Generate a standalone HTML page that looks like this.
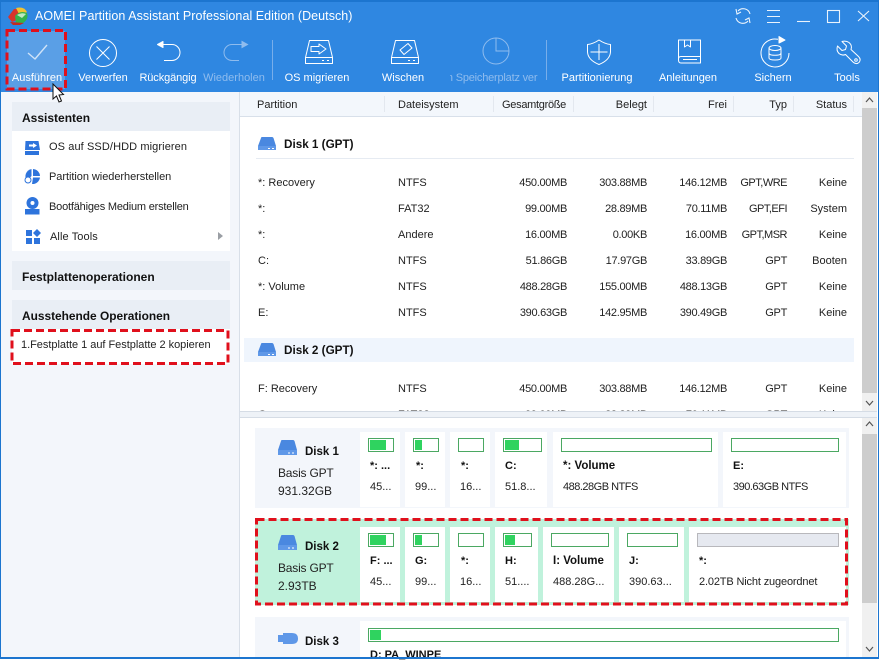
<!DOCTYPE html>
<html><head><meta charset="utf-8"><style>
html,body{margin:0;padding:0}
body{width:879px;height:659px;overflow:hidden;position:relative;background:#fff;font-family:"Liberation Sans",sans-serif;font-size:11px;color:#222}
.b{position:absolute}
.t{position:absolute;white-space:nowrap;line-height:16px;font-size:11px;color:#222;margin-top:1px}
.r{text-align:right;width:100px;letter-spacing:-.3px}
.h{font-weight:bold;color:#111}
.l{position:absolute;white-space:nowrap;line-height:16px;font-size:11px;color:#fff;text-align:center;width:90px;top:70px}
.d{color:#8fbcee}
.c{position:absolute;background:#fff}
.bar{position:absolute;height:12px;border:1px solid #4ba862;background:#fff}
.bar i{position:absolute;left:1px;top:1px;bottom:1px;background:#2fd35f}
svg{position:absolute;left:0;top:0}
</style></head><body>
<div class="b" style="left:0;top:0;width:879px;height:92px;background:#2f87e1"></div>
<div class="b" style="left:0;top:0;width:879px;height:2px;background:#1c75cf"></div>
<div class="b" style="left:7px;top:31px;width:58px;height:58px;background:#5a9fe6"></div>
<div class="b" style="left:0;top:92px;width:239px;height:567px;background:#f3f6fb"></div>
<div class="b" style="left:239px;top:92px;width:1px;height:567px;background:#d8dfe8"></div>
<div class="b" style="left:240px;top:92px;width:622px;height:24px;background:#f3f7fc;border-bottom:1px solid #d8e0ea"></div>
<div class="b" style="left:862px;top:92px;width:15px;height:319px;background:#f0f0f0"></div>
<div class="b" style="left:862px;top:108px;width:15px;height:285px;background:#cdcdcd"></div>
<div class="b" style="left:240px;top:411px;width:637px;height:7px;background:#eef2f7;border-top:1px solid #d5dce5;border-bottom:1px solid #d5dce5;box-sizing:border-box"></div>
<div class="b" style="left:862px;top:418px;width:15px;height:239px;background:#f0f0f0"></div>
<div class="b" style="left:862px;top:434px;width:15px;height:169px;background:#cdcdcd"></div>

<!-- sidebar -->
<div class="b" style="left:12px;top:102px;width:218px;height:29px;background:#e9eef5"></div>
<div class="b" style="left:12px;top:131px;width:218px;height:120px;background:#fff"></div>
<div class="b" style="left:12px;top:261px;width:218px;height:29px;background:#e9eef5"></div>
<div class="b" style="left:12px;top:300px;width:218px;height:29px;background:#e9eef5"></div>
<div class="b" style="left:12px;top:329px;width:218px;height:35px;background:#fff"></div>
<div class="t h" style="left:22px;top:109px;font-size:12px">Assistenten</div>
<div class="t" style="left:49px;top:138px;letter-spacing:.1px">OS auf SSD/HDD migrieren</div>
<div class="t" style="left:49px;top:168px;letter-spacing:-.05px">Partition wiederherstellen</div>
<div class="t" style="left:49px;top:198px;letter-spacing:-.19px">Bootfähiges Medium erstellen</div>
<div class="t" style="left:50px;top:228px;letter-spacing:.1px">Alle Tools</div>
<div class="t h" style="left:22px;top:268px;font-size:12px">Festplattenoperationen</div>
<div class="t h" style="left:22px;top:307px;font-size:11.9px">Ausstehende Operationen</div>
<div class="t" style="left:21px;top:336px;letter-spacing:-.03px">1.Festplatte 1 auf Festplatte 2 kopieren</div>

<!-- table -->
<div class="t" style="left:257px;top:96px">Partition</div>
<div class="t" style="left:398px;top:96px">Dateisystem</div>
<div class="t r" style="left:466px;top:96px">Gesamtgröße</div>
<div class="t r" style="left:547px;top:96px;letter-spacing:0">Belegt</div>
<div class="t r" style="left:627px;top:96px;letter-spacing:0">Frei</div>
<div class="t r" style="left:687px;top:96px;letter-spacing:0">Typ</div>
<div class="t r" style="left:747px;top:96px;letter-spacing:0">Status</div>
<div class="b" style="left:384px;top:96px;width:1px;height:16px;background:#e3e8ef"></div>
<div class="b" style="left:493px;top:96px;width:1px;height:16px;background:#e3e8ef"></div>
<div class="b" style="left:573px;top:96px;width:1px;height:16px;background:#e3e8ef"></div>
<div class="b" style="left:653px;top:96px;width:1px;height:16px;background:#e3e8ef"></div>
<div class="b" style="left:733px;top:96px;width:1px;height:16px;background:#e3e8ef"></div>
<div class="b" style="left:793px;top:96px;width:1px;height:16px;background:#e3e8ef"></div>
<div class="b" style="left:853px;top:96px;width:1px;height:16px;background:#e3e8ef"></div>

<div class="b" style="left:256px;top:158px;width:598px;height:1px;background:#e6ebf2"></div>
<div class="t h" style="left:284px;top:136px;font-size:11.7px">Disk 1 (GPT)</div>

<div class="t" style="left:258px;top:174px">*: Recovery</div><div class="t" style="left:398px;top:174px">NTFS</div><div class="t r" style="left:467px;top:174px">450.00MB</div><div class="t r" style="left:547px;top:174px">303.88MB</div><div class="t r" style="left:627px;top:174px">146.12MB</div><div class="t r" style="left:687px;top:174px;letter-spacing:-.5px">GPT,WRE</div><div class="t r" style="left:747px;top:174px;letter-spacing:0">Keine</div>
<div class="t" style="left:258px;top:200px">*:</div><div class="t" style="left:398px;top:200px">FAT32</div><div class="t r" style="left:467px;top:200px">99.00MB</div><div class="t r" style="left:547px;top:200px">28.89MB</div><div class="t r" style="left:627px;top:200px">70.11MB</div><div class="t r" style="left:687px;top:200px;letter-spacing:-.5px">GPT,EFI</div><div class="t r" style="left:747px;top:200px;letter-spacing:0">System</div>
<div class="t" style="left:258px;top:226px">*:</div><div class="t" style="left:398px;top:226px">Andere</div><div class="t r" style="left:467px;top:226px">16.00MB</div><div class="t r" style="left:547px;top:226px">0.00KB</div><div class="t r" style="left:627px;top:226px">16.00MB</div><div class="t r" style="left:687px;top:226px;letter-spacing:-.5px">GPT,MSR</div><div class="t r" style="left:747px;top:226px;letter-spacing:0">Keine</div>
<div class="t" style="left:258px;top:252px">C:</div><div class="t" style="left:398px;top:252px">NTFS</div><div class="t r" style="left:467px;top:252px">51.86GB</div><div class="t r" style="left:547px;top:252px">17.97GB</div><div class="t r" style="left:627px;top:252px">33.89GB</div><div class="t r" style="left:687px;top:252px">GPT</div><div class="t r" style="left:747px;top:252px;letter-spacing:0">Booten</div>
<div class="t" style="left:258px;top:278px">*: Volume</div><div class="t" style="left:398px;top:278px">NTFS</div><div class="t r" style="left:467px;top:278px">488.28GB</div><div class="t r" style="left:547px;top:278px">155.00MB</div><div class="t r" style="left:627px;top:278px">488.13GB</div><div class="t r" style="left:687px;top:278px">GPT</div><div class="t r" style="left:747px;top:278px;letter-spacing:0">Keine</div>
<div class="t" style="left:258px;top:304px">E:</div><div class="t" style="left:398px;top:304px">NTFS</div><div class="t r" style="left:467px;top:304px">390.63GB</div><div class="t r" style="left:547px;top:304px">142.95MB</div><div class="t r" style="left:627px;top:304px">390.49GB</div><div class="t r" style="left:687px;top:304px">GPT</div><div class="t r" style="left:747px;top:304px;letter-spacing:0">Keine</div>

<div class="b" style="left:244px;top:338px;width:610px;height:24px;background:#eff5fd"></div>
<div class="t h" style="left:284px;top:342px;font-size:11.7px">Disk 2 (GPT)</div>
<div class="t" style="left:258px;top:380px">F: Recovery</div><div class="t" style="left:398px;top:380px">NTFS</div><div class="t r" style="left:467px;top:380px">450.00MB</div><div class="t r" style="left:547px;top:380px">303.88MB</div><div class="t r" style="left:627px;top:380px">146.12MB</div><div class="t r" style="left:687px;top:380px">GPT</div><div class="t r" style="left:747px;top:380px;letter-spacing:0">Keine</div>
<div class="b" style="left:240px;top:402px;width:622px;height:9px;overflow:hidden">
<div class="t" style="left:18px;top:4px">G:</div><div class="t" style="left:158px;top:4px">FAT32</div><div class="t r" style="left:227px;top:4px">99.00MB</div><div class="t r" style="left:307px;top:4px">28.89MB</div><div class="t r" style="left:387px;top:4px">70.11MB</div><div class="t r" style="left:447px;top:4px">GPT</div><div class="t r" style="left:507px;top:4px;letter-spacing:0">Keine</div>
</div>

<!-- disk panels -->
<div class="b" style="left:255px;top:428px;width:594px;height:80px;background:#f3f6fb"></div>
<div class="b" style="left:255px;top:519px;width:594px;height:86px;background:#c0f2dc"></div>
<div class="b" style="left:255px;top:617px;width:594px;height:42px;background:#f3f6fb"></div>

<div class="t h" style="left:305px;top:443px;font-size:11.5px">Disk 1</div>
<div class="t" style="left:278px;top:464px;font-size:12px;letter-spacing:-.2px">Basis GPT</div>
<div class="t" style="left:278px;top:482px;font-size:12px">931.32GB</div>
<div class="t h" style="left:305px;top:538px;font-size:11.5px">Disk 2</div>
<div class="t" style="left:278px;top:559px;font-size:12px;letter-spacing:-.2px">Basis GPT</div>
<div class="t" style="left:278px;top:577px;font-size:12px">2.93TB</div>
<div class="t h" style="left:305px;top:633px;font-size:11.5px">Disk 3</div>

<!-- disk1 cards -->
<div class="c" style="left:360px;top:432px;width:40px;height:75px"></div>
<div class="c" style="left:405px;top:432px;width:40px;height:75px"></div>
<div class="c" style="left:450px;top:432px;width:40px;height:75px"></div>
<div class="c" style="left:495px;top:432px;width:52px;height:75px"></div>
<div class="c" style="left:553px;top:432px;width:165px;height:75px"></div>
<div class="c" style="left:723px;top:432px;width:123px;height:75px"></div>
<div class="bar" style="left:368px;top:438px;width:24px"><i style="width:16px"></i></div>
<div class="bar" style="left:413px;top:438px;width:24px"><i style="width:7px"></i></div>
<div class="bar" style="left:458px;top:438px;width:24px"></div>
<div class="bar" style="left:503px;top:438px;width:37px"><i style="width:14px"></i></div>
<div class="bar" style="left:561px;top:438px;width:149px"></div>
<div class="bar" style="left:731px;top:438px;width:106px"></div>
<div class="t h" style="left:370px;top:457px">*: ...</div><div class="t" style="left:370px;top:478px">45...</div>
<div class="t h" style="left:416px;top:457px">*:</div><div class="t" style="left:415px;top:478px">99...</div>
<div class="t h" style="left:461px;top:457px">*:</div><div class="t" style="left:460px;top:478px">16...</div>
<div class="t h" style="left:505px;top:457px">C:</div><div class="t" style="left:505px;top:478px">51.8...</div>
<div class="t h" style="left:563px;top:457px;font-size:11.5px">*: Volume</div><div class="t" style="left:563px;top:478px;letter-spacing:-.5px">488.28GB NTFS</div>
<div class="t h" style="left:733px;top:457px">E:</div><div class="t" style="left:733px;top:478px;letter-spacing:-.5px">390.63GB NTFS</div>

<!-- disk2 cards -->
<div class="c" style="left:360px;top:527px;width:40px;height:75px"></div>
<div class="c" style="left:405px;top:527px;width:40px;height:75px"></div>
<div class="c" style="left:450px;top:527px;width:40px;height:75px"></div>
<div class="c" style="left:495px;top:527px;width:43px;height:75px"></div>
<div class="c" style="left:543px;top:527px;width:71px;height:75px"></div>
<div class="c" style="left:619px;top:527px;width:65px;height:75px"></div>
<div class="c" style="left:689px;top:527px;width:157px;height:75px"></div>
<div class="bar" style="left:368px;top:533px;width:24px"><i style="width:16px"></i></div>
<div class="bar" style="left:413px;top:533px;width:24px"><i style="width:7px"></i></div>
<div class="bar" style="left:458px;top:533px;width:24px"></div>
<div class="bar" style="left:503px;top:533px;width:27px"><i style="width:10px"></i></div>
<div class="bar" style="left:551px;top:533px;width:56px"></div>
<div class="bar" style="left:627px;top:533px;width:49px"></div>
<div class="bar" style="left:697px;top:533px;width:140px;background:#e6e9f0;border-color:#b8b8bc"></div>
<div class="t h" style="left:370px;top:552px">F: ...</div><div class="t" style="left:370px;top:573px">45...</div>
<div class="t h" style="left:415px;top:552px">G:</div><div class="t" style="left:415px;top:573px">99...</div>
<div class="t h" style="left:461px;top:552px">*:</div><div class="t" style="left:460px;top:573px">16...</div>
<div class="t h" style="left:505px;top:552px">H:</div><div class="t" style="left:505px;top:573px">51....</div>
<div class="t h" style="left:553px;top:552px;font-size:11.5px">I: Volume</div><div class="t" style="left:553px;top:573px">488.28G...</div>
<div class="t h" style="left:629px;top:552px">J:</div><div class="t" style="left:629px;top:573px">390.63...</div>
<div class="t h" style="left:699px;top:552px">*:</div><div class="t" style="left:699px;top:573px;letter-spacing:-.15px">2.02TB Nicht zugeordnet</div>

<!-- disk3 -->
<div class="c" style="left:360px;top:621px;width:486px;height:38px"></div>
<div class="bar" style="left:368px;top:628px;width:469px"><i style="width:11px"></i></div>
<div class="t h" style="left:370px;top:646px">D: PA_WINPE</div>

<!-- title + labels -->
<div class="t" style="left:35px;top:7px;font-size:12.5px;color:#fff;line-height:17px;letter-spacing:.05px">AOMEI Partition Assistant Professional Edition (Deutsch)</div>
<div class="l" style="left:-8px">Ausführen</div>
<div class="l" style="left:58px">Verwerfen</div>
<div class="l" style="left:123px;letter-spacing:-.1px">Rückgängig</div>
<div class="l d" style="left:189px">Wiederholen</div>
<div class="l" style="left:272px">OS migrieren</div>
<div class="l" style="left:358px">Wischen</div>
<div class="b" style="left:450px;top:69px;width:90px;height:17px;overflow:hidden"><div class="t d" style="left:-9px;top:0;color:#8fbcee;letter-spacing:-.2px">on Speicherplatz ver</div></div>
<div class="l" style="left:552px">Partitionierung</div>
<div class="l" style="left:643px">Anleitungen</div>
<div class="l" style="left:728px">Sichern</div>
<div class="l" style="left:802px">Tools</div>

<svg width="879" height="659" viewBox="0 0 879 659" fill="none">
<!-- logo -->
<path d="M8 17 L14 9 L20 9 L19 19 L12 22 Z" fill="#d8352b"/>
<path d="M16 8 Q24 6 27 12 L20 16 Z" fill="#f2c230"/>
<path d="M15 16 Q20 10 27 13 Q29 19 23 23 L16 23 Z" fill="#35b24a"/>
<path d="M17 15 Q22 12 26 14 L22 18 Z" fill="#bfe8c0"/>
<path d="M10 22 L24 23 L20 25 L13 25 Z" fill="#c42a22"/>
<!-- window controls -->
<g stroke="#fff" stroke-width="1.1" opacity=".9">
<path d="M738 11 A7 7 0 0 1 750 14 M748 21 A7 7 0 0 1 736 18"/>
<path d="M736 9 L737 14 L741 12 M750 23 L749 18 L745 20"/>
<path d="M767 10.5 H780 M767 16.5 H780 M767 22.5 H780"/>
<path d="M797 21.5 H810"/>
<rect x="827.5" y="10.5" width="12" height="12"/>
<path d="M858 11 L869 21 M869 11 L858 21"/>
</g>
<!-- toolbar icons -->
<g stroke="#fff" stroke-width="1" stroke-linejoin="round">
<path d="M28 53 L35 59 L47 45" stroke="#cfe3f8" stroke-width="1.4"/>
<circle cx="103" cy="53" r="13.5"/>
<path d="M96.500 46.500 L109.500 59.500 M109.500 46.500 L96.500 59.500"/>
<path d="M160 44.5 H172 a8 8 0 0 1 8 8 a8 8 0 0 1 -8 8 H164"/>
<path d="M163 41.500 L157.500 44.500 L163 47.500 Z" fill="#fff"/>
<path d="M305.500 57.500 L309.500 40.500 H328.500 L332.500 57.500 Z"/>
<rect x="305.500" y="57.500" width="27" height="6"/>
<path d="M327 60.500 H329 M322 60.500 H324"/>
<path d="M311 46.500 H319 V44 L326 49 L319 54 V51.500 H311 Z"/>
<path d="M391.500 57.500 L395.500 40.500 H414.500 L418.500 57.500 Z"/>
<rect x="391.500" y="57.500" width="27" height="6"/>
<path d="M413 60.500 H415 M408 60.500 H410"/>
<path d="M400 50 L408 43.500 L412 48 L404 54.500 Z"/>
<path d="M599 40 Q593 44 587.500 44.500 V52 Q588 60 599 64.500 Q610 60 610.500 52 V44.500 Q605 44 599 40 Z"/>
<path d="M599 44 V60 M590.500 52 H607.500"/>
<path d="M678.500 40 H700.500 V63 H681 Q678.500 63 678.500 60 Z M678.500 59 Q678.500 56.500 681 56.500 H700.500 M683 59.500 H697"/>
<path d="M684.500 40 V47 L687.500 45 L690.500 47 V40"/>
<path d="M778 39.300 A14 14 0 1 0 789 53" />
<path d="M779 36.500 L785 40 L779 43 Z" fill="#fff"/>
<ellipse cx="775" cy="48" rx="6" ry="2.500"/>
<path d="M769 48 V58 Q769 60 775 60 Q781 60 781 58 V48 M769 53 Q769 55.300 775 55.300 Q781 55.300 781 53"/>
<path d="M842 41.500 L846.500 46 L845.500 49.500 L842 50.500 L837.500 46 Q836 50.500 839 53.500 Q842 56 845.500 54.500 L853 62 Q856 65 859 62.500 Q861.500 59.500 858.500 56.500 L851 49.500 Q852.500 45.500 849 42.500 Q846 40.500 842 41.500 Z"/>
<circle cx="856" cy="60" r="1.300"/>
</g>
<g stroke="#8fbcee" stroke-width="1">
<path d="M245 44.500 H232 a8 8 0 0 0 -8 8 a8 8 0 0 0 8 8 H239"/>
<path d="M242 41.500 L247.500 44.500 L242 47.500 Z" fill="#8fbcee"/>
<circle cx="496" cy="51" r="13"/>
<path d="M496 38 V51 H509"/>
</g>
<path d="M272.500 40 V80 M546.500 40 V80" stroke="#78aeea"/>
<!-- sidebar icons -->
<g fill="#2e74dc">
<path d="M25.500 141 H38.500 L40 150 H25 Z"/><rect x="25" y="151" width="14" height="4"/>
<path d="M29 144.500 H33 V143 L37 145.500 L33 148 V146.500 H29 Z" fill="#fff"/>
<path d="M33 169 A7.500 7.500 0 0 1 40 176 H33 Z"/><path d="M31.500 169 V176 L27 181 A7.500 7.500 0 0 1 31.500 169 Z"/><path d="M40 177.500 A7.500 7.500 0 0 1 32 184 L33 177.500 Z"/>
<circle cx="28" cy="180" r="3" fill="#fff" stroke="#2e74dc"/>
<circle cx="32.500" cy="203" r="6"/><circle cx="32.500" cy="203" r="2" fill="#fff"/>
<rect x="25" y="209" width="14.500" height="5.500"/>
<rect x="26" y="230" width="6" height="6"/><rect x="26" y="238" width="6" height="6"/><rect x="34" y="238" width="6" height="6"/>
<path d="M37 229 L41 233 L37 237 L33 233 Z"/>
</g>
<path d="M218 232 L223 236 L218 240 Z" fill="#9a9ea4"/>
<!-- disk icons -->
<g fill="#4a88e0">
<path d="M261 138 Q261 137 262 137 H272 Q273 137 273.500 138 L276 146 H258 Z"/><path d="M258 146 H276 V150 H258 Z" fill="#5f98e8"/>
<path d="M261 344 Q261 343 262 343 H272 Q273 343 273.500 344 L276 352 H258 Z"/><path d="M258 352 H276 V356 H258 Z" fill="#5f98e8"/>
<path d="M281 441 Q281 440 282 440 H293 Q294 440 294.500 441 L297 450 H278 Z"/><path d="M278 450 H297 V455 H278 Z" fill="#5f98e8"/>
<path d="M281 536 Q281 535 282 535 H293 Q294 535 294.500 536 L297 545 H278 Z"/><path d="M278 545 H297 V550 H278 Z" fill="#5f98e8"/>
<path d="M283 633 H292 Q298 633 298 638.500 Q298 644 292 644 H283 Z" fill="#5f98e8"/><rect x="278" y="635" width="5" height="7" fill="#5f98e8"/>
</g>
<path d="M268 148.500 h2 M272 148.500 h2 M268 354.500 h2 M272 354.500 h2 M288 453 h2 M292 453 h2 M288 548 h2 M292 548 h2" stroke="#fff"/>
<!-- scrollbar arrows -->
<g stroke="#555" stroke-width="1.2">
<path d="M866 102 L869.500 98 L873 102 M866 401 L869.500 405 L873 401 M866 426 L869.500 422 L873 426 M866 647 L869.500 651 L873 647"/>
</g>
<!-- bottom / side edges -->
<path d="M0.500 0 V659 M878.500 0 V659" stroke="#1c75cf"/>
<path d="M0 658 H879" stroke="#1c75cf" stroke-width="2"/>
<!-- red dashes -->
<g stroke="#e0101c" stroke-width="3" stroke-dasharray="8 4" fill="none">
<rect x="7" y="30.500" width="58.500" height="58.500"/>
<rect x="12" y="330.500" width="216" height="33"/>
<rect x="256.500" y="519.500" width="590" height="84.500"/>
</g>
<!-- cursor -->
<path d="M53 84 V99 L56.500 96 L59 102 L61.500 101 L59 95 L63.500 94.500 Z" fill="#fff" stroke="#111" stroke-width="1"/>
</svg>
</body></html>
